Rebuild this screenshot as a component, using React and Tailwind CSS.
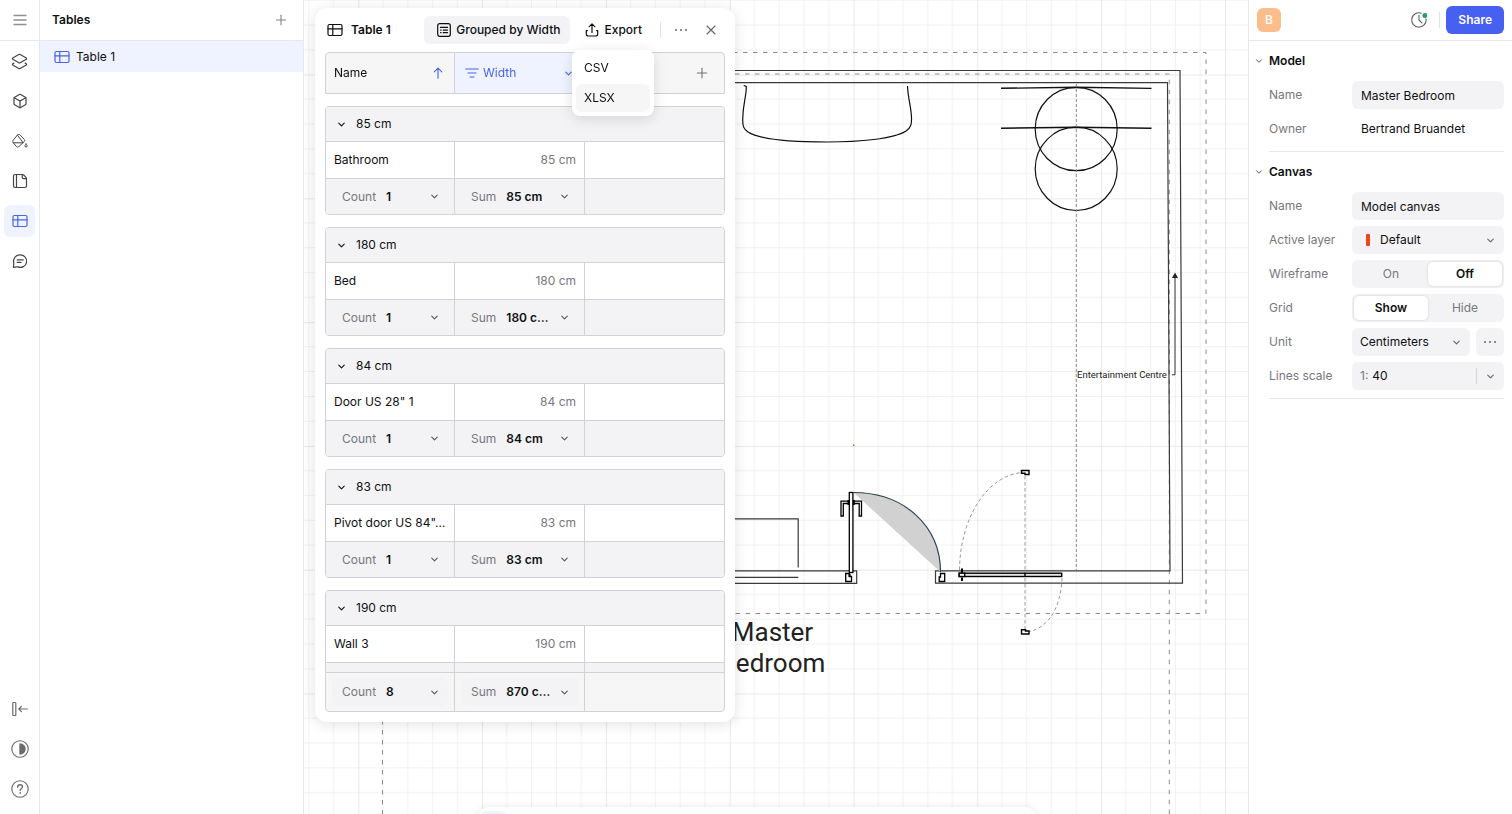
import React, { useState } from 'react';
import { Box, ChevronDown, Layers2, Plus, X } from 'lucide-react';

const groups = [
  { label: '85 cm', name: 'Bathroom', width: '85 cm', sum: '85 cm' },
  { label: '180 cm', name: 'Bed', width: '180 cm', sum: '180 c…' },
  { label: '84 cm', name: 'Door US 28" 1', width: '84 cm', sum: '84 cm' },
  { label: '83 cm', name: 'Pivot door US 84"…', width: '83 cm', sum: '83 cm' },
  { label: '190 cm', name: 'Wall 3', width: '190 cm' },
];

const Svg = ({ size = 16, children, className }) => (
  <svg
    width={size}
    height={size}
    viewBox="0 0 16 16"
    fill="none"
    stroke="currentColor"
    strokeWidth="1.2"
    strokeLinecap="round"
    strokeLinejoin="round"
    className={className}
    aria-hidden="true"
  >
    {children}
  </svg>
);

const TableIcon = ({ className }) => (
  <Svg className={className}>
    <rect x="1" y="2.5" width="14" height="11" rx="1.5" />
    <path d="M1 6.8h14M5.8 2.5v11" />
  </Svg>
);

const BucketIcon = () => (
  <Svg>
    <g strokeWidth="1">
      <path d="M5.500 2 L1.200 7.200 C.5 8 .5 8.900 1.200 9.700 L4.500 13.500 C5.200 14.300 6.200 14.300 7 13.500 L12.300 8.500 C12.900 7.900 12.900 7.200 12.400 6.600 L8.200 2 C7.400 1.200 6.200 1.200 5.500 2 Z" />
      <path d="M1.500 9.800 H10.800 M5.600 2.400 L10.900 9.400" />
      <path d="M14 11 C14.700 11.800 15.100 12.400 15.100 12.900 A1.100 1.100 0 0 1 12.900 12.900 C12.900 12.400 13.300 11.800 14 11 Z" />
    </g>
  </Svg>
);

const PagesIcon = () => (
  <Svg>
    <path d="M4.500 1.500H3.200c-1 0-1.700.7-1.700 1.700v9.600c0 1 .7 1.700 1.700 1.700h9.600c1 0 1.700-.7 1.700-1.700V5.500c0-.5-.2-.9-.5-1.200L11.700 2c-.3-.3-.7-.5-1.200-.5z" />
    <path d="M4.500 1.500v13M10.200 1.700v2.600c0 .8.6 1.400 1.400 1.400h2.700" />
  </Svg>
);

const CommentIcon = () => (
  <Svg>
    <path d="M8.200 1.800a6.300 6.300 0 1 1-2.300 12.100c-.5-.2-.9-.2-1.400-.1l-2.700.6c-.3 0-.5-.1-.4-.4l.4-2.900c.1-.6 0-1-.1-1.600A6.300 6.300 0 0 1 8.200 1.800z" />
    <path d="M5.200 6.900h6M5.200 9.400h3.800" />
  </Svg>
);

const CollapseIcon = () => (
  <Svg>
    <rect x=".8" y="1.500" width="3" height="13" rx=".6" />
    <path d="M15.400 8H6.800M9.400 5.400 6.800 8l2.600 2.600" />
  </Svg>
);

const ContrastIcon = () => (
  <Svg size={18}>
    <circle cx="8" cy="8" r="7.300" strokeWidth="1" />
    <path d="M8 3.500a4.500 4.500 0 0 1 0 9z" fill="currentColor" />
  </Svg>
);

const HelpIcon = () => (
  <Svg size={18}>
    <circle cx="8" cy="8" r="7.300" strokeWidth="1" />
    <path d="M5.900 6.400c0-1.300.9-2.200 2.200-2.200 1.200 0 2.100.8 2.100 1.900 0 1.700-2.100 1.700-2.100 3.200" />
    <circle cx="8.100" cy="11.500" r=".4" fill="currentColor" strokeWidth=".6" />
  </Svg>
);

const GroupIcon = () => (
  <Svg>
    <rect x="1.700" y="1.700" width="12.600" height="12.600" rx="2" />
    <path d="M4.500 5.400h7M7.200 8.100h4.300M7.200 10.700h4.300M4.600 8.100h.5M4.600 10.700h.5" />
  </Svg>
);

const ExportIcon = () => (
  <Svg>
    <path d="M8 10.500V2M5.200 4.600 8 1.800l2.800 2.800" />
    <path d="M3.400 8.600H2.300V12c0 1.200.9 2 2 2h7.400c1.200 0 2-.9 2-2V8.600h-1.100" />
  </Svg>
);

const HistoryIcon = () => (
  <Svg>
    <path d="M10.300 1.200A7.200 7.200 0 1 0 15 6.800M8 3.300V8l2.900 2.900" strokeWidth="1.100" />
    <circle cx="13.900" cy="3.400" r="2.500" fill="#22a45d" stroke="none" />
  </Svg>
);

const SortIcon = () => (
  <svg width="14" height="12" viewBox="0 0 14 12" fill="none" stroke="currentColor" strokeWidth="1.200" strokeLinecap="round" aria-hidden="true">
    <path d="M.8 2h12.400M3 6h8M5 10h4" />
  </svg>
);

const Dots = () => (
  <svg width="14" height="4" viewBox="0 0 14 4" fill="currentColor" aria-hidden="true">
    <circle cx="2" cy="2" r="1" />
    <circle cx="7" cy="2" r="1" />
    <circle cx="12" cy="2" r="1" />
  </svg>
);

const Chevron = ({ className }) => <ChevronDown size={11} strokeWidth={2.4} className={className} />;

const railItems = [
  { label: 'Layers', icon: <Layers2 size={17} strokeWidth={1.7} /> },
  { label: 'Components', icon: <Box size={16} strokeWidth={1.8} /> },
  { label: 'Materials', icon: <BucketIcon /> },
  { label: 'Pages', icon: <PagesIcon /> },
  { label: 'Tables', icon: <TableIcon />, active: true },
  { label: 'Comments', icon: <CommentIcon /> },
];

function Rail() {
  return (
    <nav className="flex w-10 shrink-0 flex-col border-r border-[#e8e8ea] text-[#45454a]">
      <div className="flex h-[41px] items-center justify-center border-b border-[#e8e8ea]">
        <button type="button" aria-label="Menu" className="text-[#8e8e93]">
          <svg width="14" height="12" viewBox="0 0 14 12" stroke="currentColor" strokeWidth="1.300" aria-hidden="true">
            <path d="M.5 1.500h13M.5 6h13M.5 10.500h13" />
          </svg>
        </button>
      </div>
      {railItems.map((item) => (
        <div key={item.label} className="flex h-10 items-center justify-center">
          <button
            type="button"
            aria-label={item.label}
            className={`flex h-8 w-[31px] items-center justify-center rounded-md ${item.active ? 'bg-[#eff3ff] text-[#4b63e6]' : ''}`}
          >
            {item.icon}
          </button>
        </div>
      ))}
      <div className="mt-auto pb-[5px] text-[#6b6b70]">
        <button type="button" aria-label="Collapse panel" className="flex h-10 w-full items-center justify-center"><CollapseIcon /></button>
        <button type="button" aria-label="Theme" className="flex h-10 w-full items-center justify-center"><ContrastIcon /></button>
        <button type="button" aria-label="Help" className="flex h-10 w-full items-center justify-center"><HelpIcon /></button>
      </div>
    </nav>
  );
}

function TablesPanel() {
  return (
    <aside className="w-[264px] shrink-0 border-r border-[#e8e8ea]">
      <div className="flex h-[41px] items-center justify-between border-b border-[#e8e8ea] px-3">
        <h2 className="font-semibold">Tables</h2>
        <button type="button" aria-label="Add table" className="flex size-5 items-center justify-center text-[#808085]">
          <Plus size={16} strokeWidth={1.6} />
        </button>
      </div>
      <button type="button" className="flex h-[31px] w-full items-center gap-1.5 bg-[#eff3ff] px-3.5">
        <TableIcon className="text-[#4b63e6]" />
        Table 1
      </button>
    </aside>
  );
}

// Floor plan, drawn in window coordinates and shifted by the left panels
function FloorPlan() {
  return (
    <svg className="absolute inset-0 size-full" aria-hidden="true">
      <defs>
        <pattern id="grid" x="853.5" y="74.5" width="123.8" height="123.8" patternUnits="userSpaceOnUse">
          <path d="M24.760 0v123.800M49.520 0v123.800M74.280 0v123.800M99.040 0v123.800M0 24.760h123.800M0 49.520h123.800M0 74.280h123.800M0 99.040h123.800" stroke="#f1f1f1" fill="none" />
          <path d="M0 0v123.800M0 0h123.800" stroke="#d4d4d4" fill="none" />
        </pattern>
      </defs>
      <g transform="translate(-304 0)">
        <rect x="304" y="0" width="3000" height="2000" fill="url(#grid)" />

        <g fill="none" stroke="#8c8c8c" strokeDasharray="4.500 5.500">
          <path d="M733 52.500H1206V613.500H600" />
          <path d="M735 74H1169.300V2000" />
          <path d="M382.500 700V2000" />
        </g>

        {/* walls */}
        <g fill="none" stroke="#3a3a3a" strokeWidth="1.200">
          <path d="M700 70.500H1180L1182.500 583.200H935.500V570.800H1170L1167.500 82.700H700" />
          <path d="M700 570.800H856.700V583.300H700" />
          <path d="M700 577.300H798.300M700 518.800H798.200V567.500" />
        </g>

        {/* basin, stools */}
        <g fill="none" stroke="#111" strokeWidth="1.200">
          <path d="M743.700 85.500L746.300 86.500C746.500 97 742.600 104 742.700 120C742.700 126 743.500 129 748 132C760 139.500 795 142 827 142C859 142 894 139 906 131C911 127.500 911.700 124 911.500 118C911.300 107 908 99 907.500 86" />
          <ellipse cx="1076.200" cy="129" rx="41" ry="41.700" />
          <ellipse cx="1076.200" cy="168.800" rx="41" ry="41.700" />
          <path d="M1001 88.300L1076 87.300L1151.500 88.400M1001 128.200L1076 127.300L1151.500 128.200" strokeWidth="1.400" />
        </g>
        <path d="M1076.300 84V570" stroke="#8c8c8c" strokeDasharray="3 2" />

        {/* entertainment centre leader */}
        <path d="M1172 374.800H1175V278" fill="none" stroke="#333" />
        <path d="M1175 272.500L1178 278H1172Z" fill="#222" />
        <text x="1077" y="378" fontSize="9.500" fill="#222" className="font-['Roboto']">Entertainment Centre</text>

        {/* hinged door */}
        <path d="M853.500 492.500C905 492.500 940.500 527 940.500 572Z" fill="#d1d1d1" />
        <path d="M853.500 492.500C905 492.500 940.500 527 940.500 572" fill="none" stroke="#2d4450" strokeWidth="1.200" />
        <g fill="#fff" stroke="#000" strokeWidth="1.300">
          <path d="M841 516V501.200H861.500V516H859.200V503.500H843.300V516Z" />
          <rect x="849.300" y="492.500" width="3.600" height="80" />
          <path d="M848.500 500v5M853.800 500v5" strokeWidth="2" />
          <path d="M845.700 573.500H849.500V576.500H851.500V581.500H845.700Z" />
          <path d="M849.500 574V577" strokeWidth="2" />
          <path d="M940.500 573.500H944.700V581.500H939.200V577H940.500Z" />
        </g>

        {/* pivot door */}
        <g fill="none" stroke="#9a9a9a" strokeDasharray="3.500 2.500">
          <path d="M959.500 570C960 515 990 472.500 1025 472.500" />
          <path d="M1062 578C1061 608 1048 628 1029 631.500" />
          <path d="M1025 476V629" />
        </g>
        <g fill="#fff" stroke="#000" strokeWidth="1.400">
          <rect x="959.200" y="573.200" width="102.500" height="3.300" fill="#e3e5e2" />
          <rect x="959.200" y="573.200" width="5.500" height="3.300" />
          <path d="M962 568.500v4M962 577.500v3.500" strokeWidth="2" />
          <path d="M1025 573v4" />
          <path d="M1021.500 470.500H1029V474.500H1025V473.200H1021.500Z" />
          <path d="M1021.500 629.700H1025.500V631H1029V634H1021.500Z" />
        </g>
        <rect x="853" y="444.500" width="1.500" height="1.500" fill="#8a7a45" />

        <text textAnchor="middle" fontSize="26" fill="#222" className="font-['Roboto']">
          <tspan x="772.5" y="641">Master</tspan>
          <tspan x="772.5" y="672">Bedroom</tspan>
        </text>
      </g>
    </svg>
  );
}

function Aggregate({ label, value }) {
  return (
    <div className="mx-[6px] flex h-7 min-w-0 flex-1 items-center gap-2.5 rounded-md bg-[#f3f3f5] pr-2 pl-2.5">
      <select aria-label="Aggregate" defaultValue={label} className="shrink-0 appearance-none bg-transparent text-[#77777c] [field-sizing:content]">
        <option>{label}</option>
        <option>None</option>
      </select>
      <span className="flex-1 font-semibold whitespace-nowrap">{value}</span>
      <Chevron className="-ml-2.5 shrink-0 text-[#55555a]" />
    </div>
  );
}

const row = 'grid grid-cols-[129px_130px_1fr]';
const cell = 'flex min-w-0 items-center border-r border-[#d2d2d6]';

function DataTable() {
  return (
    <div className="min-h-0 flex-1 overflow-y-auto [scrollbar-width:none]">
      <table className="block">
        <thead className="sticky top-0 block overflow-hidden rounded-t-[4px] border border-[#d2d2d6] bg-[#f6f6f7]">
          <tr className={`${row} h-10`}>
            <th className={`${cell} justify-between pr-2.5 pl-2 font-normal`}>
              Name
              <Svg size={12}><path d="M8 15V1.500M3 6.500 8 1.500l5 5" stroke="#4b63e6" strokeWidth="1.500" /></Svg>
            </th>
            <th className={`${cell} gap-1 bg-[#eff3ff] pr-2.5 pl-2.5 font-normal text-[#4b63e6]`}>
              <SortIcon />
              Width
              <Chevron className="ml-auto" />
            </th>
            <th className="flex items-center justify-end pr-3.5 font-normal">
              <button type="button" aria-label="Add column" className="text-[#707075]"><Plus size={16} strokeWidth={1.6} /></button>
            </th>
          </tr>
        </thead>
        {groups.map((g) => (
          <tbody key={g.label} className="mt-3 block overflow-hidden rounded-[4px] border border-[#d2d2d6]">
            <tr className="block border-b border-[#d2d2d6] bg-[#f3f3f5]">
              <th colSpan={3} className="flex h-[34px] items-center pl-2.5 font-normal">
                <button type="button" className="flex items-center gap-[9px]">
                  <Chevron />
                  {g.label}
                </button>
              </th>
            </tr>
            <tr className={`${row} h-[37px] border-b border-[#d2d2d6] bg-white`}>
              <td className={`${cell} pl-2 whitespace-nowrap`}>{g.name}</td>
              <td className={`${cell} justify-end pr-2 text-[#77777c]`}>{g.width}</td>
              <td />
            </tr>
            <tr className={`${row} h-[35px] bg-[#f3f3f5]`}>
              <td className={cell}>{g.sum && <Aggregate label="Count" value="1" />}</td>
              <td className={cell}>{g.sum && <Aggregate label="Sum" value={g.sum} />}</td>
              <td />
            </tr>
          </tbody>
        ))}
      </table>
    </div>
  );
}

function Totals() {
  return (
    <table className="block shrink-0">
      <tbody className="block overflow-hidden rounded-b-[4px] border border-[#d2d2d6] bg-[#f6f6f7]">
        <tr className={`${row} h-[38px]`}>
          <td className={cell}><Aggregate label="Count" value="8" /></td>
          <td className={cell}><Aggregate label="Sum" value="870 c…" /></td>
          <td />
        </tr>
      </tbody>
    </table>
  );
}

function TableCard() {
  const [exportOpen, setExportOpen] = useState(true);

  return (
    <section className="absolute top-2 bottom-[92px] left-[11px] flex w-[420px] flex-col rounded-xl bg-white px-2.5 pb-2.5 shadow-[0_2px_14px_rgba(0,0,0,0.12)]">
      <header className="flex h-11 shrink-0 items-center">
        <h1 className="ml-0.5 flex items-center gap-2 font-semibold"><TableIcon />Table 1</h1>
        <div className="ml-auto flex items-center">
          <button type="button" className="flex h-7 items-center gap-1 rounded-md bg-[#f3f3f5] pr-2.5 pl-3 font-medium">
            <GroupIcon />
            Grouped by Width
          </button>
          <div className="relative ml-1.5">
            <button
              type="button"
              aria-expanded={exportOpen}
              onClick={() => setExportOpen(!exportOpen)}
              className="flex h-7 items-center gap-1 pr-3 pl-2 font-medium"
            >
              <ExportIcon />
              Export
            </button>
            {exportOpen && (
              <div role="menu" className="absolute top-full right-0 z-20 mt-1.5 flex w-[82px] flex-col gap-0.5 rounded-lg bg-white p-1 shadow-[0_3px_14px_rgba(0,0,0,0.13)]">
                <button type="button" role="menuitem" className="h-7 rounded-md px-2 text-left">CSV</button>
                <button type="button" role="menuitem" className="h-7 rounded-md bg-[#f6f6f7] px-2 text-left">XLSX</button>
              </div>
            )}
          </div>
          <span className="mx-1.5 h-4 w-px bg-[#e2e2e5]" />
          <button type="button" aria-label="More" className="flex size-7 items-center justify-center text-[#66666b]"><Dots /></button>
          <button type="button" aria-label="Close" className="ml-0.5 flex size-7 items-center justify-center text-[#66666b]"><X size={16} strokeWidth={1.7} /></button>
        </div>
      </header>
      <DataTable />
      <Totals />
    </section>
  );
}

function Section({ title, children }) {
  return (
    <section className="px-2">
      <button type="button" className="-ml-1 flex h-10 items-center gap-1 font-semibold">
        <span className="flex w-3 justify-center text-[#55555a]"><ChevronDown size={10} strokeWidth={2.4} /></span>
        {title}
      </button>
      <div className="ml-3 flex flex-col gap-1.5 border-b border-[#e8e8ea] pb-2">{children}</div>
    </section>
  );
}

const Field = ({ label, id, children }) => (
  <div className="flex h-7 items-center">
    <label htmlFor={id} className="w-[83px] shrink-0 text-[#77777c]">{label}</label>
    <div className="flex min-w-0 flex-1 items-center">{children}</div>
  </div>
);

const inputClass = 'h-7 w-full rounded-md bg-[#f3f3f5] px-[9px]';

function Toggle({ name, options, initial }) {
  const [value, setValue] = useState(initial);
  return (
    <div id={name} role="radiogroup" className="grid h-7 flex-1 grid-cols-2 rounded-md bg-[#f3f3f5] p-0.5">
      {options.map((o) => (
        <label
          key={o}
          className={`relative flex items-center justify-center rounded-[5px] ${value === o ? 'bg-white font-semibold shadow-[0_0_3px_rgba(0,0,0,0.14)]' : 'text-[#77777c]'}`}
        >
          <input type="radio" name={name} checked={value === o} onChange={() => setValue(o)} className="sr-only" />
          {o}
        </label>
      ))}
    </div>
  );
}

function Inspector() {
  return (
    <aside className="w-[264px] shrink-0 border-l border-[#e8e8ea]">
      <div className="flex h-[41px] items-center border-b border-[#e8e8ea] px-2">
        <span className="flex size-6 items-center justify-center rounded-md bg-[#fcbd8c] font-medium text-white">B</span>
        <button type="button" aria-label="History" className="ml-auto text-[#606065]"><HistoryIcon /></button>
        <span className="mr-1.5 ml-3 h-4 w-px bg-[#e2e2e5]" />
        <button type="button" className="h-7 rounded-md bg-[#4660f1] px-3 font-semibold text-white">Share</button>
      </div>

      <Section title="Model">
        <Field label="Name" id="model-name"><input id="model-name" defaultValue="Master Bedroom" className={inputClass} /></Field>
        <Field label="Owner" id="owner"><output id="owner" className="px-[9px]">Bertrand Bruandet</output></Field>
      </Section>

      <Section title="Canvas">
        <Field label="Name" id="canvas-name"><input id="canvas-name" defaultValue="Model canvas" className={inputClass} /></Field>
        <Field label="Active layer" id="layer">
          <div className="relative flex-1">
            <select id="layer" className="h-7 w-full appearance-none rounded-md bg-[#f3f3f5] pl-7">
              <option>Default</option>
            </select>
            <span className="absolute top-2 left-3.5 h-3 w-1 rounded-[1px] bg-[#f0451d]" />
            <Chevron className="pointer-events-none absolute top-[9px] right-2 text-[#66666b]" />
          </div>
        </Field>
        <Field label="Wireframe" id="wireframe"><Toggle name="wireframe" options={['On', 'Off']} initial="Off" /></Field>
        <Field label="Grid" id="grid-toggle"><Toggle name="grid-toggle" options={['Show', 'Hide']} initial="Show" /></Field>
        <Field label="Unit" id="unit">
          <div className="relative flex-1">
            <select id="unit" className="h-7 w-full appearance-none rounded-md bg-[#f3f3f5] pl-2">
              <option>Centimeters</option>
              <option>Inches</option>
            </select>
            <Chevron className="pointer-events-none absolute top-[9px] right-2 text-[#66666b]" />
          </div>
          <button type="button" aria-label="Unit settings" className="ml-1.5 flex size-7 items-center justify-center rounded-md bg-[#f3f3f5] text-[#66666b]"><Dots /></button>
        </Field>
        <Field label="Lines scale" id="scale">
          <div className="flex h-7 min-w-0 flex-1 items-center rounded-md bg-[#f3f3f5] pl-2">
            <span className="text-[#77777c]">1:</span>
            <input id="scale" defaultValue="40" className="ml-1 w-0 flex-1 bg-transparent" />
            <button type="button" aria-label="Scale presets" className="flex h-4 w-7 items-center justify-center border-l border-[#d2d2d6] text-[#66666b]"><Chevron /></button>
          </div>
        </Field>
      </Section>
    </aside>
  );
}

export default function App() {
  return (
    <div className="flex h-screen overflow-hidden bg-white font-['Inter',sans-serif] text-xs text-[#0f0f12]">
      <Rail />
      <TablesPanel />
      <main className="relative min-w-0 flex-1 overflow-hidden">
        <FloorPlan />
        <TableCard />
        {/* Tool bar, tucked under the bottom edge */}
        <div className="absolute -bottom-[33px] left-[173px] flex h-10 w-[560px] rounded-xl bg-white p-1 shadow-[0_1px_8px_rgba(0,0,0,0.12)]">
          <button type="button" aria-label="Select" className="h-8 w-[26px] rounded-md bg-[#eff3ff]" />
        </div>
      </main>
      <Inspector />
    </div>
  );
}
